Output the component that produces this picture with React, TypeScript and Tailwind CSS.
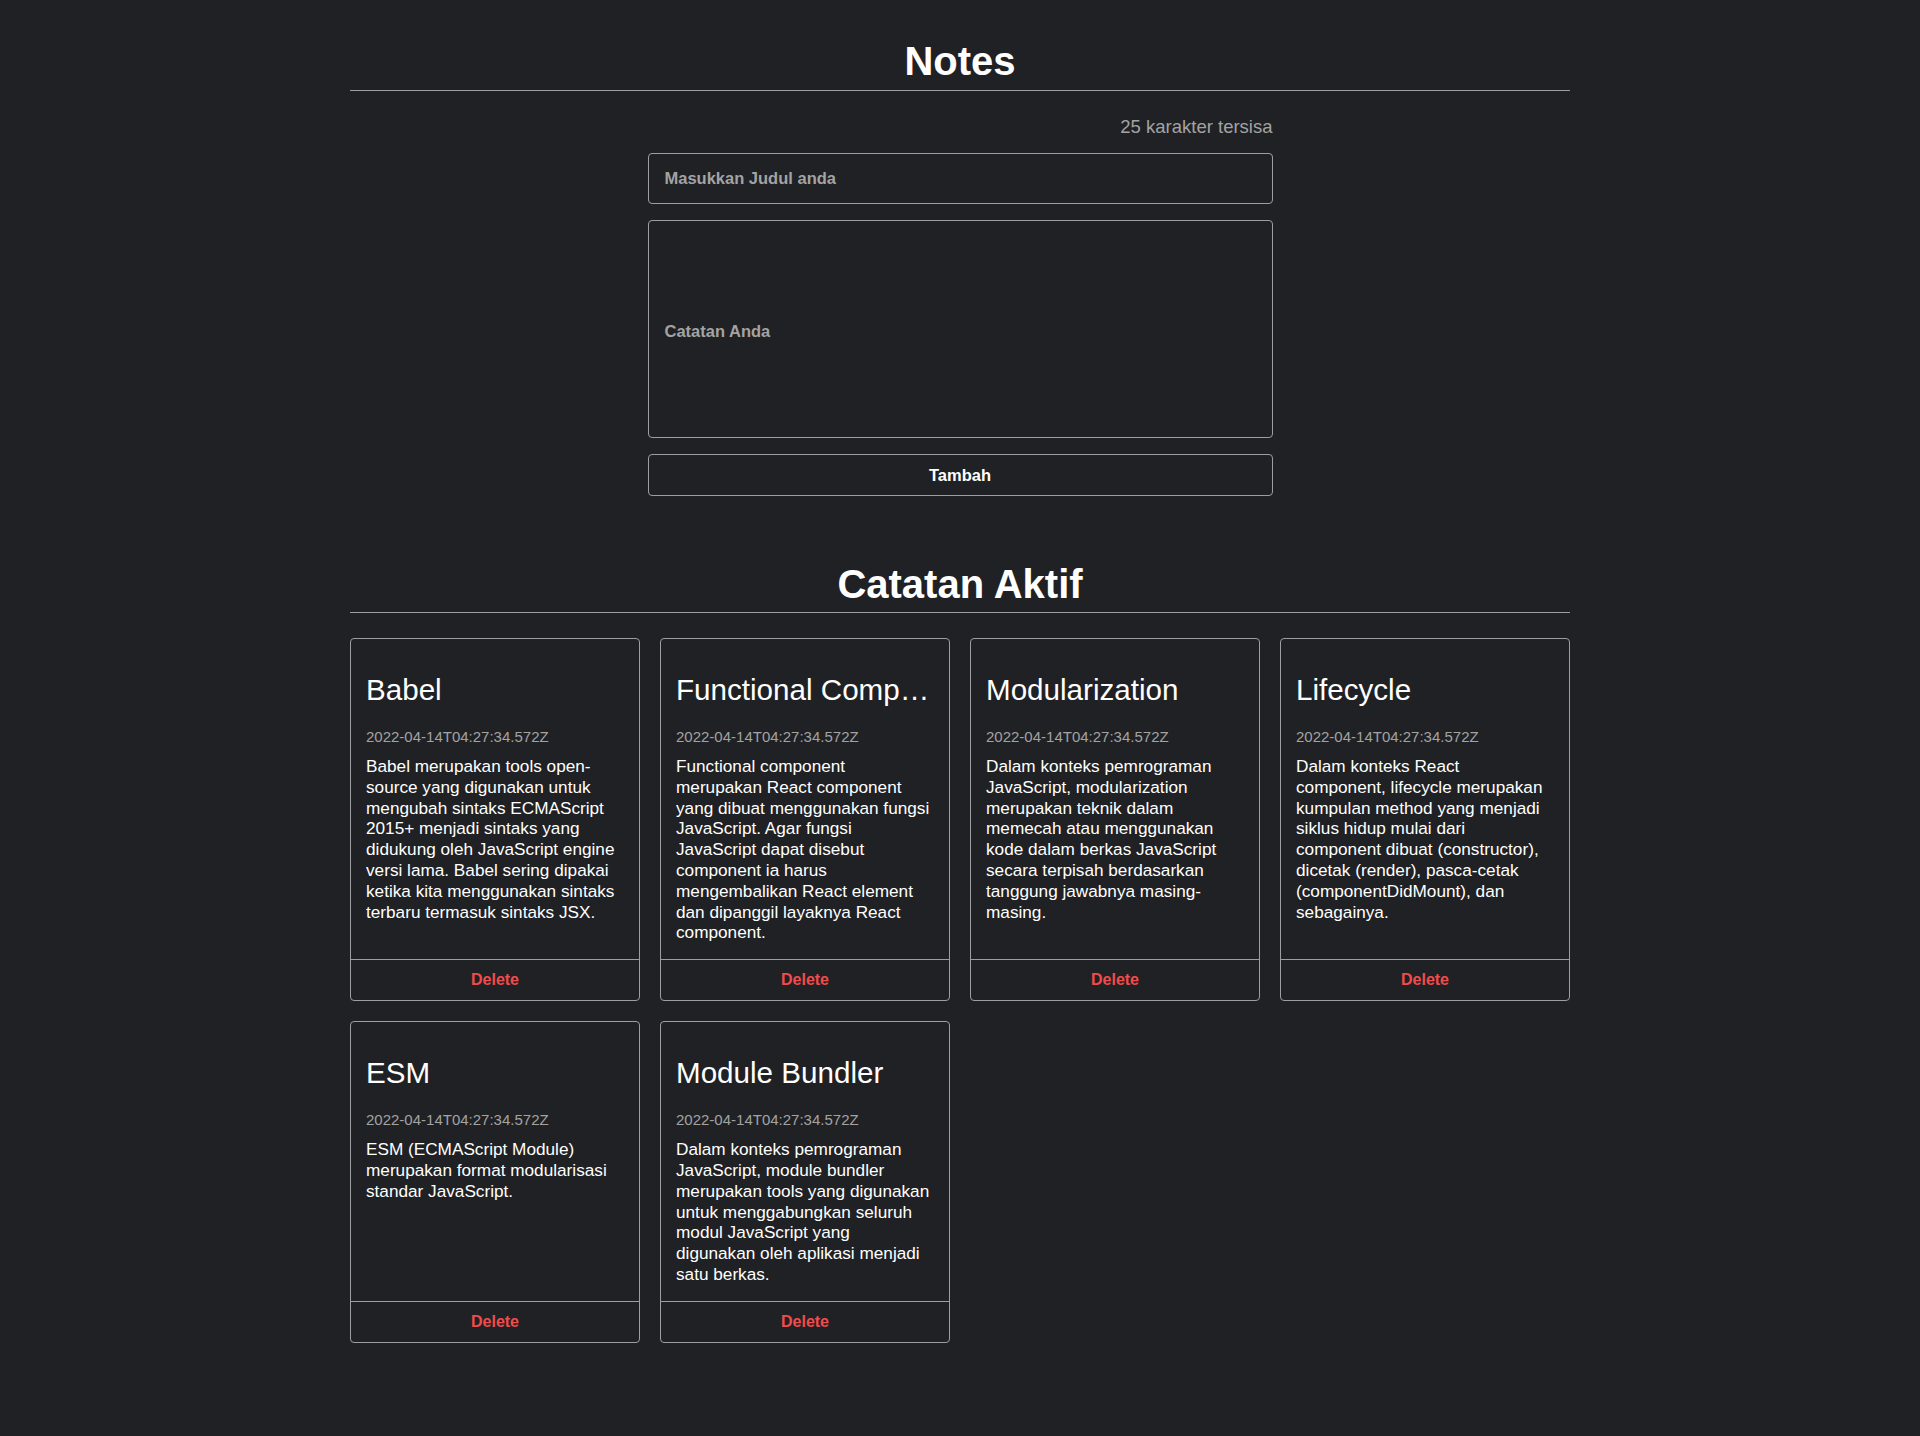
import React from 'react';

type Note = { title: string; body: string };

const notes: Note[] = [
  {
    title: 'Babel',
    body: 'Babel merupakan tools open-source yang digunakan untuk mengubah sintaks ECMAScript 2015+ menjadi sintaks yang didukung oleh JavaScript engine versi lama. Babel sering dipakai ketika kita menggunakan sintaks terbaru termasuk sintaks JSX.',
  },
  {
    title: 'Functional Component',
    body: 'Functional component merupakan React component yang dibuat menggunakan fungsi JavaScript. Agar fungsi JavaScript dapat disebut component ia harus mengembalikan React element dan dipanggil layaknya React component.',
  },
  {
    title: 'Modularization',
    body: 'Dalam konteks pemrograman JavaScript, modularization merupakan teknik dalam memecah atau menggunakan kode dalam berkas JavaScript secara terpisah berdasarkan tanggung jawabnya masing-masing.',
  },
  {
    title: 'Lifecycle',
    body: 'Dalam konteks React component, lifecycle merupakan kumpulan method yang menjadi siklus hidup mulai dari component dibuat (constructor), dicetak (render), pasca-cetak (componentDidMount), dan sebagainya.',
  },
  {
    title: 'ESM',
    body: 'ESM (ECMAScript Module) merupakan format modularisasi standar JavaScript.',
  },
  {
    title: 'Module Bundler',
    body: 'Dalam konteks pemrograman JavaScript, module bundler merupakan tools yang digunakan untuk menggabungkan seluruh modul JavaScript yang digunakan oleh aplikasi menjadi satu berkas.',
  },
];

const NoteCard: React.FC<{ note: Note }> = ({ note }) => (
  <div className="flex flex-col rounded border border-[#9e9e9e]">
    <div className="flex-1 pt-[33px] pr-[19px] pb-4 pl-[15px]">
      <h3 className="mr-[-4px] truncate text-[29.6px] leading-[36px] text-white">{note.title}</h3>
      <p className="mt-[20px] text-[15px] leading-[18px] text-[#a3a3a3]">2022-04-14T04:27:34.572Z</p>
      <p className="mt-[10px] text-[17.2px] leading-[20.8px] text-white">{note.body}</p>
    </div>
    <button className="h-[41px] border-t border-[#9e9e9e] text-[16px] font-bold text-[#f14b4b]">
      Delete
    </button>
  </div>
);

const App: React.FC = () => {
  return (
    <div
      className="min-h-screen bg-[#202124] text-white"
      style={{ fontFamily: '"Liberation Sans", Arial, sans-serif' }}
    >
      <div className="mx-auto w-[1220px] pt-[38px] pb-20">
        <h1 className="border-b border-[#9e9e9e] pb-[6px] text-center text-[40px] leading-[46px] font-bold">
          Notes
        </h1>

        <form className="mx-auto mt-[25px] flex w-[625px] flex-col" onSubmit={(e) => e.preventDefault()}>
          <p className="text-right text-[18.5px] leading-[22px] text-[#a3a3a3]">25 karakter tersisa</p>
          <input
            className="mt-[15px] h-[51px] rounded border border-[#9e9e9e] bg-transparent px-4 text-[16.5px] font-bold text-white outline-none placeholder:text-[#a3a3a3]"
            placeholder="Masukkan Judul anda"
          />
          <textarea
            className="mt-4 h-[218px] resize-none rounded border border-[#9e9e9e] bg-transparent px-4 pt-[98px] text-[16.5px] font-bold text-white outline-none placeholder:text-[#a3a3a3]"
            placeholder="Catatan Anda"
          />
          <button className="mt-4 h-[42px] rounded border border-[#9e9e9e] text-[16.5px] font-bold text-white">
            Tambah
          </button>
        </form>

        <h2 className="mt-[65px] border-b border-[#9e9e9e] pb-[5px] text-center text-[40px] leading-[46px] font-bold">
          Catatan Aktif
        </h2>

        <div className="mt-[25px] grid grid-cols-4 gap-5">
          {notes.map((n) => (
            <NoteCard key={n.title} note={n} />
          ))}
        </div>
      </div>
    </div>
  );
};

export default App;
